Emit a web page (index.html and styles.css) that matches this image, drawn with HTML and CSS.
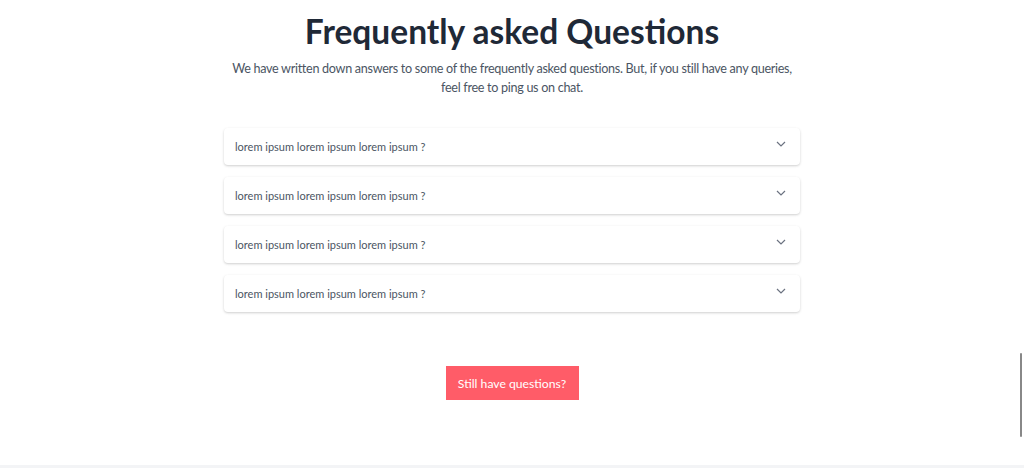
FILE: index.html
```html
<!DOCTYPE html>
<html lang="en">
<head>
<meta charset="utf-8">
<title>FAQ</title>
<link rel="stylesheet" href="styles.css">
</head>
<body>
<main class="page">
  <section class="faq">
    <h1 class="title">Frequently asked Questions</h1>
    <p class="lead">We have written down answers to some of the frequently asked questions. But, if you still have any queries, feel free to ping us on chat.</p>
    <div class="list">
      <div class="item"><span>lorem ipsum lorem ipsum lorem ipsum ?</span><svg class="chev" width="10" height="6" viewBox="0 0 10 6"><path d="M1 1l4 4 4-4" fill="none" stroke="#6b7280" stroke-width="1.2"/></svg></div>
      <div class="item"><span>lorem ipsum lorem ipsum lorem ipsum ?</span><svg class="chev" width="10" height="6" viewBox="0 0 10 6"><path d="M1 1l4 4 4-4" fill="none" stroke="#6b7280" stroke-width="1.2"/></svg></div>
      <div class="item"><span>lorem ipsum lorem ipsum lorem ipsum ?</span><svg class="chev" width="10" height="6" viewBox="0 0 10 6"><path d="M1 1l4 4 4-4" fill="none" stroke="#6b7280" stroke-width="1.2"/></svg></div>
      <div class="item"><span>lorem ipsum lorem ipsum lorem ipsum ?</span><svg class="chev" width="10" height="6" viewBox="0 0 10 6"><path d="M1 1l4 4 4-4" fill="none" stroke="#6b7280" stroke-width="1.2"/></svg></div>
    </div>
    <button class="cta">Still have questions?</button>
  </section>
  <div class="footer-edge"></div>
</main>
<div class="scroll-thumb"></div>
</body>
</html>
```
FILE: styles.css
```css
* { box-sizing: border-box; }
html, body { margin: 0; padding: 0; background: #fff; }
body { font-family: "Lato", "Noto Sans", sans-serif; overflow: hidden; height: 468px; }
.page { display: flex; flex-direction: column; height: 468px; }
.faq { flex: 1; display: flex; flex-direction: column; align-items: center; padding-top: 8px; }
.title { margin: 0; font-size: 33.5px; line-height: 46px; font-weight: 700; color: #1f2937; }
.lead { margin: 5px 0 0; width: 572px; text-align: center; font-size: 12.6px; letter-spacing: -0.3px; line-height: 19px; color: #4b5563; }
.list { margin-top: 31px; width: 576px; display: flex; flex-direction: column; gap: 12px; }
.item { height: 37px; background: #fff; border-radius: 4px; box-shadow: 0 1px 3px rgba(0,0,0,0.12), 0 1px 2px rgba(0,0,0,0.08); display: flex; align-items: flex-start; justify-content: space-between; padding: 9px 14px 0 11px; font-size: 11px; color: #4b5563; }
.item span { line-height: 16px; margin-top: 2px; }
.chev { margin-top: 4px; }
.cta { margin-top: 54px; width: 133px; height: 34px; border: 0; background: #ff5c68; color: #fff; font-family: inherit; font-size: 12.2px; padding: 0; }
.footer-edge { height: 3px; background: #f3f4f6; }
.scroll-thumb { position: absolute; right: 2px; top: 353px; width: 2px; height: 84px; background: #888; border-radius: 1px; }
```
